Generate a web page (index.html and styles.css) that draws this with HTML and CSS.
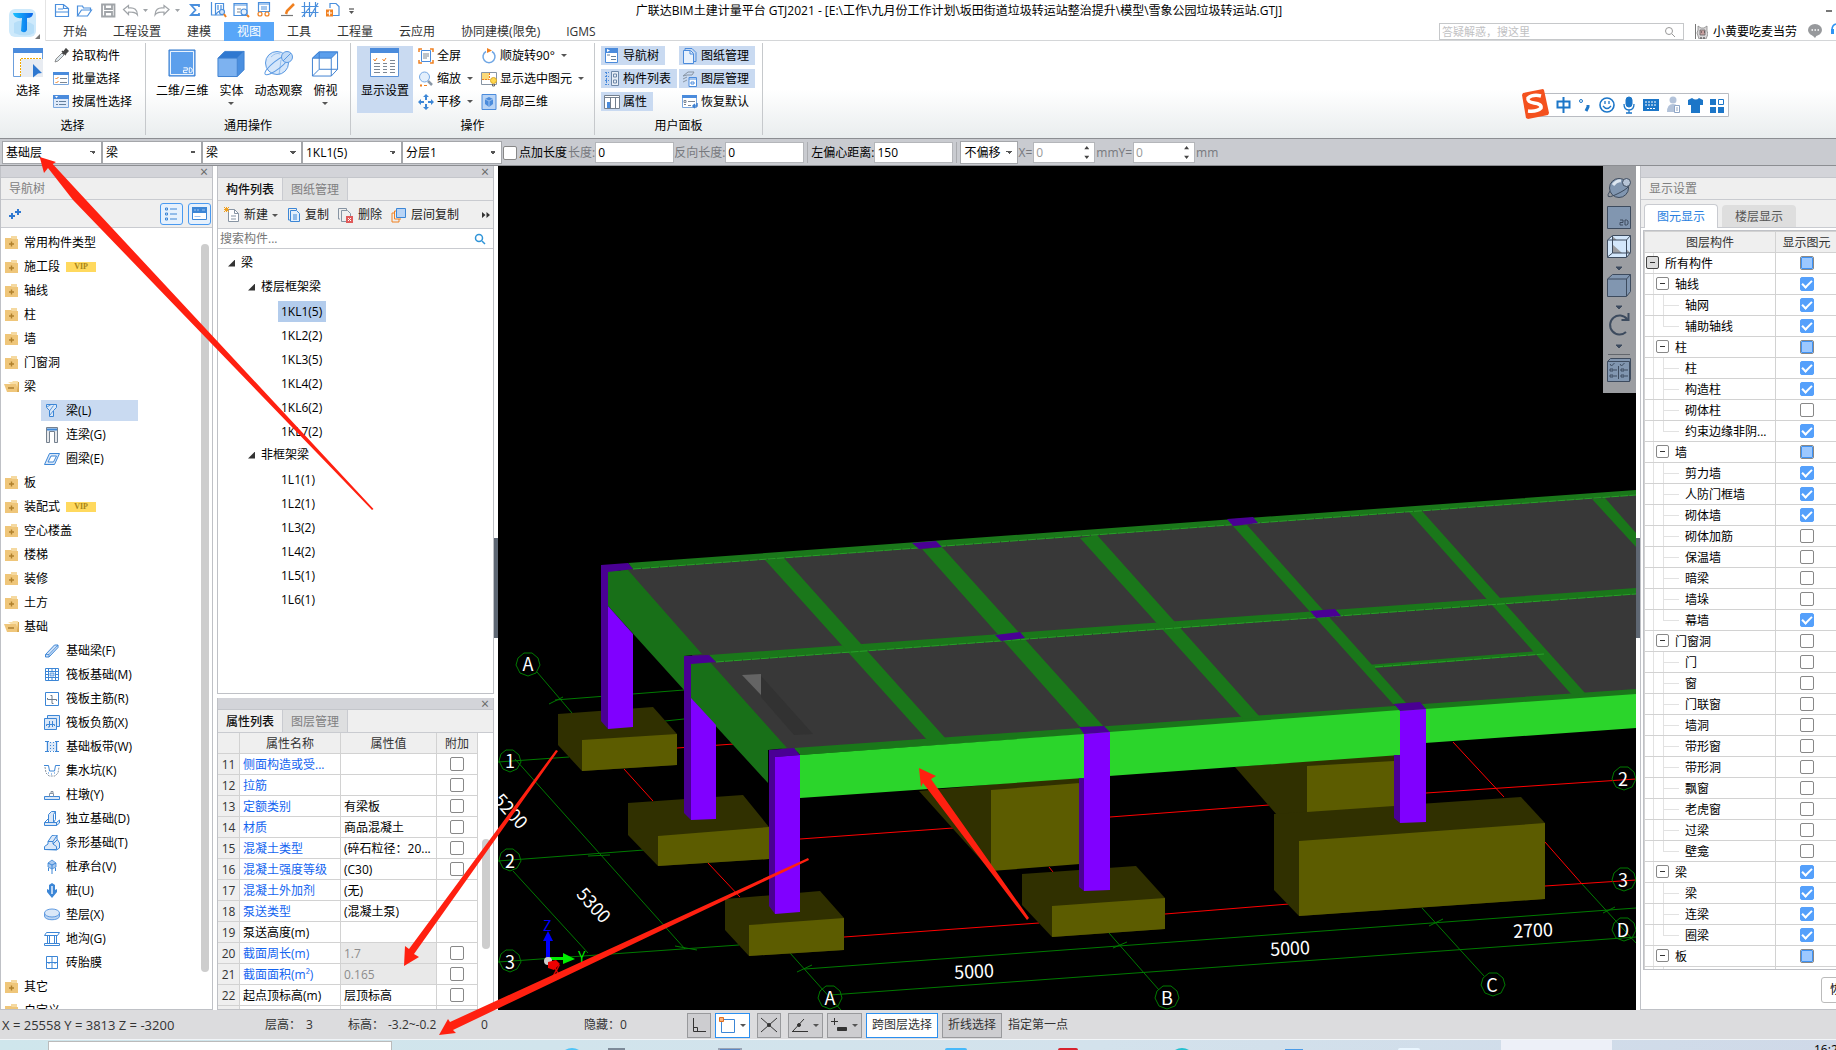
FILE: index.html
```html
<!DOCTYPE html>
<html lang="zh-CN">
<head>
<meta charset="utf-8">
<title>广联达BIM土建计量平台 GTJ2021</title>
<link rel="stylesheet" href="styles.css">
</head>
<body>
<svg class="defs" aria-hidden="true">
  <symbol id="folder" viewBox="0 0 16 14"><path d="M7 0h6v3H7z" fill="#f5d9a0"/><path d="M1 2h6l1 1h6v10H1z" fill="#efc67a"/><path d="M7.500 5.500v5M5 8h5" stroke="#b0802c" stroke-width="1.400"/></symbol>
  <symbol id="open" viewBox="0 0 16 14"><path d="M4 2h4l1-1h5v8z" fill="#f9dfa6"/><path d="M0 4h12l3 8H3z" fill="#efc67a"/><path d="M14 2h1v10h-2z" fill="#d9a850"/><path d="M4 8h6" stroke="#a87a2c" stroke-width="1.400"/></symbol>
  <symbol id="beam" viewBox="0 0 16 16"><path d="M2.500 1.500h10v3l-3 3v6h-4v-6l-3-3z" fill="#dbe8f8" stroke="#3c86d6"/><path d="M3 4l4-2.500M5.500 8l4-5.500M6 12l3-4" stroke="#3c86d6" stroke-width=".8"/></symbol>
  <symbol id="lbeam" viewBox="0 0 16 16"><path d="M2.500.5h11v15h-3v-11h-5v11h-3z" fill="#e6e8eb" stroke="#74808e"/><path d="M3 2.500h10" stroke="#3c86d6" stroke-width="2"/></symbol>
  <symbol id="ring" viewBox="0 0 16 16"><path d="M5.500 2.500h10l-5 11h-10z" fill="#dbe8f8" stroke="#3c86d6"/><path d="M7 5h5.500l-3 6H4z" fill="#fff" stroke="#3c86d6"/></symbol>
  <symbol id="fbeam" viewBox="0 0 16 16"><path d="M1.500 11.500l9-9.500h3.500v2.500l-9 9.500H1.500z" fill="#cfe0f6" stroke="#3c86d6"/><path d="M1.500 11.500H5V14M5 11.500L14 2" fill="none" stroke="#3c86d6" stroke-width=".8"/></symbol>
  <symbol id="raft" viewBox="0 0 16 16"><path d="M1.500 1.500h13v12h-13zM1.500 4.500h13M1.500 10.500h13M4.500 1.500v12M11.500 1.500v12M8 1v3M8 11v3M1 7.500h3M12 7.500h3" fill="none" stroke="#3c86d6"/><path d="M6 6h4v3H6z" fill="#bcd5f3" stroke="#3c86d6" stroke-width=".7"/></symbol>
  <symbol id="rmain" viewBox="0 0 16 16"><path d="M1.500 1.500h13v13h-13z" fill="#fff" stroke="#3c86d6"/><path d="M3.500 7V8.500h9V10M6.500 4.500H8v8h1.500" fill="none" stroke="#6d7a89"/></symbol>
  <symbol id="rneg" viewBox="0 0 16 16"><path d="M3.500 3.500v-3h12v11h-3M.5 3.500h12v11H.5z" fill="#dbe8f8" stroke="#3c86d6"/><path d="M2.500 11V9.500h8V11M5.500 6v6H4M8.500 6v6" fill="none" stroke="#3c86d6"/></symbol>
  <symbol id="strip" viewBox="0 0 16 16"><path d="M2 3h12v9H2z" fill="#dbe8f8"/><path d="M1 2.500h4M1 12.500h4M3.500 2v11M11 2.500h4M11 12.500h4M12.500 2v11" stroke="#3c86d6"/><path d="M6.500 3v10M9.500 3v10" stroke="#3c86d6" stroke-dasharray="1 2"/></symbol>
  <symbol id="pit" viewBox="0 0 16 16"><path d="M0 2.500h4.500l1 5.500h5l1-5.500H16" fill="none" stroke="#3c86d6"/><path d="M1 4l1 6 3 3h6l3-3 1-6" fill="none" stroke="#8794a3" stroke-dasharray="2 1"/><path d="M4 10h1M7 11h1M10 10h1" stroke="#3c86d6"/></symbol>
  <symbol id="pier" viewBox="0 0 16 16"><path d="M.5 9.500h15v3H.5z" fill="#dbe8f8" stroke="#3c86d6"/><path d="M5.500 9.500v-3h4v3M7 6V4.500h2V6" fill="none" stroke="#8794a3"/></symbol>
  <symbol id="indep" viewBox="0 0 16 16"><path d="M.5 11.500h12v3H.5zM12.500 11.500l3-2.500v3l-3 2.500zM4.500 3.500l3-3h4l-2 3v8h-5z" fill="#dbe8f8" stroke="#3c86d6"/><path d="M11.500.5v8l-2 3M.5 11.500L4 8" fill="none" stroke="#3c86d6"/></symbol>
  <symbol id="sfound" viewBox="0 0 16 16"><path d="M.5 14.500v-3L4 9V6.500l4-6 5-.5v4l2.500 4v5l-3 2z" fill="#dbe8f8" stroke="#3c86d6"/><path d="M4 6.500h5V9l3.500 2.500v3H.5M9 6.500L13 .5M9 9l4-4" fill="none" stroke="#3c86d6"/></symbol>
  <symbol id="cap" viewBox="0 0 16 16"><path d="M8 1l4 3v4l-4 2-4-2V4z" fill="#a9c9ef" stroke="#3c86d6" stroke-width=".8"/><path d="M4 4l4 2 4-2M8 6v9M4.500 9v3M11.500 9v3" fill="none" stroke="#3c86d6"/></symbol>
  <symbol id="pile" viewBox="0 0 16 16"><path d="M5 2l3-2 3 2v5l2-1v3l-5 6-5-6V6l2 1z" fill="#3c86d6"/><path d="M7 3h2v8H7z" fill="#bcd5f3"/></symbol>
  <symbol id="bed" viewBox="0 0 16 16"><path d="M.5 6v3c0 5 15 5 15 0V6" fill="#bcd5f3" stroke="#5f9ae0"/><ellipse cx="8" cy="6" rx="7.500" ry="4" fill="#dbe8f8" stroke="#5f9ae0"/></symbol>
  <symbol id="trench" viewBox="0 0 16 16"><path d="M.5 4.500l2-3h13l-2 3zM3.500 4.500v8M12.500 4.500v8M5.500 5v8M10.500 5v8M.5 14.500h15v-2H.5z" fill="none" stroke="#3c86d6"/></symbol>
  <symbol id="brick" viewBox="0 0 16 16"><path d="M2.500 1.500h11v12h-11zM2.500 7.500h11M8 1.500v12M5 7v2M11 7v2" fill="none" stroke="#3c86d6"/></symbol>
</svg>

<header class="titlebar">
  <div class="logo"><svg width="30" height="30" viewBox="0 0 30 30"><defs><linearGradient id="lg" x1="0" x2="1"><stop offset="0" stop-color="#19c2ff"/><stop offset="1" stop-color="#0a63e8"/></linearGradient></defs><rect x="1" y="1" width="27" height="28" rx="6" fill="#cde9fb"/><path d="M6 15q8-6 20 2v8q-8 5-20 0z" fill="#b6def8"/><path d="M5 5h20q0 5-6 5v12q-2 4-6 1l1-13q-8 1-9-5z" fill="url(#lg)"/></svg><svg class="corner" width="5" height="5" viewBox="0 0 5 5"><path d="M5 0v5H0z" fill="#777"/></svg></div>
  <div class="head">
    <div class="caption">
      <div class="quick">
        <svg width="302" height="18" viewBox="53 1 302 18" fill="none" stroke-width="1.200">
          <g stroke="#4a8fdd"><path d="M55.500 4.500h8l5 4v8h-13zM55.500 12h13M63.500 4.500v4h5M58 9h5"/><path d="M77.500 16V6h5l1 2h7v2M77.500 16l4-6h10l-4 6z"/></g>
          <g stroke="#a0a4a8"><path d="M102 4.500h12.500v12H102zM105 5v4h7V5M105 16v-4h7v4" stroke-width="1.800"/><path d="M123.500 9.500l5-4v2.500c6-1 9 2 9 7-2-3-5-3-9-3v2.500zM169 9.500l-5-4v2.500c-6-1-9 2-9 7 2-3 5-3 9-3v2.500z"/></g>
          <path d="M143 9h5l-2.500 3zM175 9h5l-2.500 3z" fill="#a0a4a8"/>
          <path d="M199 7V5h-8l4.500 5-4.500 5h8v-2" stroke="#4a8fdd" stroke-width="1.800"/>
          <g stroke="#4a8fdd"><path d="M211.500 2v13h12M215.500 3.500h8v8h-5l-3 3zM218 5v5M221 5v5"/><path d="M234 3.500h13v12h-13zM234 5h13" /><path d="M237 9h4M237 12h3" stroke="#7c8794"/><path d="M258.500 2.500h11v9h-11zM258.500 4h11M261 7h6M261 9h6"/><path d="M301.500 6.500h17M301.500 12.500h17M304.500 2v15M309.500 2v15M315.500 2v15M302 17l8-10M310 17l8-14"/><path d="M330 8V3.500h6l3 3v9h-6"/></g>
          <g stroke="#f08020"><circle cx="222" cy="12" r="2.500" fill="#cfe2f8" stroke="#4a8fdd"/><path d="M224 14l2 3M247 15l2 2" stroke-width="2"/><circle cx="244" cy="12" r="3" fill="#e6f2fd" stroke="#4a8fdd"/><circle cx="260" cy="14" r="2"/><circle cx="267" cy="14" r="2"/><path d="M294 4l-7 7-1 3" stroke-width="2.500"/></g>
          <path d="M281 15.500h12" stroke="#777"/><path d="M326 9.500h7v7h-7z" fill="#f08020"/><path d="M329.500 10.500v5M327 13h5" stroke="#fff"/>
          <path d="M349 9h5" stroke="#555"/><path d="M349 11h5l-2.500 3z" fill="#555"/>
        </svg>
      </div>
      <h1>广联达BIM土建计量平台 GTJ2021 - [E:\工作\九月份工作计划\坂田街道垃圾转运站整治提升\模型\雪象公园垃圾转运站.GTJ]</h1>
      <button class="min" aria-label="最小化"></button>
    </div>
    <div class="tabrow">
      <nav class="tabs"><a href="#">开始</a><a href="#">工程设置</a><a href="#">建模</a><a href="#" class="on">视图</a><a href="#">工具</a><a href="#">工程量</a><a href="#">云应用</a><a href="#">协同建模(限免)</a><a href="#">IGMS</a></nav>
      <label class="ask"><input type="search" placeholder="答疑解惑，搜这里" aria-label="答疑解惑"><svg width="12" height="12" viewBox="0 0 12 12" fill="none" stroke="#999"><circle cx="5" cy="5" r="3.500"/><path d="M8 8l3 3"/></svg></label>
      <div class="user"><svg width="13" height="15" viewBox="0 0 13 15"><path d="M.5 0v15" stroke="#777"/><path d="M3 6L3 2l3 2h3l3-2v5l1 3-2 5H4L2 9z" fill="#d9d6d8" stroke="#888" stroke-width=".8"/><path d="M5 6h5v5H5z" fill="#c9a0a0" stroke="#666" stroke-width=".8"/><path d="M6 8h1M9 8h1M6 13v2M9 13v2" stroke="#333"/></svg><span>小黄要吃麦当劳</span></div>
      <svg class="chat" width="28" height="17" viewBox="0 0 28 17"><ellipse cx="7" cy="7" rx="7" ry="6" fill="#97999c"/><path d="M4 12h5l-2 3z" fill="#97999c"/><path d="M3.500 7h1.500M6.500 7H8M9.500 7H11" stroke="#fff" stroke-width="1.600"/><path d="M28 1q-4 1-4 6" fill="none" stroke="#2f94f3" stroke-width="1.600"/><path d="M23 6h3v5h-3z" fill="#2f94f3"/></svg>
    </div>
  </div>
</header>

<section class="ribbon">
  <div class="group g1">
    <div class="tools">
      <button class="big pick"><svg width="30" height="30" viewBox="0 0 30 30"><path d="M.5.5h29v28H.5z" fill="#fff" stroke="#6c9fdc"/><path d="M0 0h30v5H0z" fill="#4a8bdc"/><path d="M8 11h22v18H8z" fill="#e8ecf2"/><path d="M7.500 28V10.500H29" fill="none" stroke="#f2a900" stroke-dasharray="2 1"/><path d="M20 16l9 9-4 .5-5 4z" fill="#2f78d0"/></svg>选择</button>
      <div class="col">
        <button><svg width="16" height="16" viewBox="0 0 16 16"><path d="M2 14l1-3 6-6 2 2-6 6z" fill="#dfe8ee" stroke="#777" stroke-width=".8"/><path d="M9 3l4 4M10 5l3-4 2 2-3 3z" fill="#444" stroke="#444" stroke-width="1.500"/></svg>拾取构件</button>
        <button><svg width="16" height="16" viewBox="0 0 16 16"><path d="M.5 1.500h15v12H.5z" fill="#fff" stroke="#7aa7de"/><path d="M0 1h16v3H0z" fill="#4a8bdc"/><path d="M2.500 7l1 1 2-2M2.500 11l1 1 2-2" fill="none" stroke="#f08020"/><path d="M7 7.500h7M7 11.500h7" stroke="#7c8794"/></svg>批量选择</button>
        <button><svg width="16" height="16" viewBox="0 0 16 16"><path d="M.5 1.500h15v12H.5z" fill="#dfeafa" stroke="#7aa7de"/><path d="M0 1h16v4H0z" fill="#4a8bdc"/><path d="M2 2h3L3.500 4z" fill="#fff"/><path d="M3 7.500h2M6 7.500h7M3 10.500h2M6 10.500h7" stroke="#64809c"/></svg>按属性选择</button>
      </div>
    </div>
    <h2>选择</h2>
  </div>
  <div class="group g2">
    <div class="tools">
      <button class="big"><svg width="28" height="30" viewBox="0 0 29 30"><path d="M1 1.500h27v27H1z" fill="#5c9fec" stroke="#3c7fd0"/><path d="M2.500 3h24v24h-24z" fill="none" stroke="#fff"/><path d="M16 20h4v2.500h-4V25h4M22 20v5h1.500l1.500-1v-3l-1.500-1z" fill="none" stroke="#fff"/></svg>二维/三维</button>
      <button class="big"><svg width="28" height="30" viewBox="0 0 29 30"><path d="M1 10l7-7h20l-7 7z" fill="#2f78d0"/><path d="M1 10h20v19H1z" fill="#7db2f0"/><path d="M21 10l7-7v19l-7 7z" fill="#4a8fe0"/><path d="M1 10l7-7h20v19l-7 7H1zM21 29V10l7-7M1 10h20" fill="none" stroke="#3c7fd0"/></svg>实体<i class="car"></i></button>
      <button class="big"><svg width="30" height="30" viewBox="0 0 30 30" stroke="#5a99e2"><circle cx="14" cy="15" r="11.500" fill="#d5e6fa"/><ellipse cx="14" cy="17" rx="15" ry="4" transform="rotate(-38 14 17)" fill="none"/><path d="M8 9q5-5 9-3M18 12l-2 15" fill="none" stroke-opacity=".5"/><circle cx="24" cy="9" r="5.500" fill="#c2dbf7"/><path d="M20 13l8-8" /></svg>动态观察</button>
      <button class="big"><svg width="28" height="30" viewBox="0 0 29 30"><path d="M1 10l7-7h20l-7 7z" fill="#5c9fec"/><path d="M1.500 10l7-6.500h19v18L21 28.500H1.500zM21 28.500V10l6.500-6.500M1.500 10H21M8.500 4v17.500h19M8.500 21.500l-7 7" fill="none" stroke="#3c7fd0"/></svg>俯视<i class="car"></i></button>
    </div>
    <h2>通用操作</h2>
  </div>
  <div class="group g3">
    <div class="tools">
      <button class="big sel"><svg width="30" height="30" viewBox="0 0 30 30"><path d="M.5.500h28v28H.5z" fill="#fff" stroke="#5c93d8"/><path d="M0 0h29v5H0z" fill="#4a8bdc"/><path d="M3.500 11l1.500 2 2-3M12.500 11l1.500 2 2-3" fill="none" stroke="#f08020"/><path d="M4 15.500h6M4 18.500h6M4 21.500h6M4 24.500h6M13 15.500h4M13 18.500h4M13 21.500h4M13 24.500h4M20 12.500h5M20 15.500h5M20 18.500h5M20 21.500h5M20 24.500h5" stroke="#7c8794"/></svg>显示设置</button>
      <div class="col c1">
        <button><svg width="16" height="16" viewBox="0 0 16 16" fill="none"><path d="M1 4V1h3M12 1h3v3M15 12v3h-3M4 15H1v-3" stroke="#f08020" stroke-width="1.500"/><path d="M3.500 2.500h9v11h-9z" stroke="#4a8bdc" fill="#fff"/><path d="M5 6h6M5 8h6M5 10h4" stroke="#7c8794"/></svg>全屏</button>
        <button><svg width="16" height="16" viewBox="0 0 16 16" fill="none"><circle cx="6.500" cy="6" r="5" fill="#e3effc" stroke="#74a8e4"/><path d="M10 10l4 4" stroke="#8a97a6" stroke-width="2.500"/><path d="M2 14.500h2M6 14.500h3M3 13v3" stroke="#f08020"/></svg>缩放<i class="car"></i></button>
        <button><svg width="16" height="16" viewBox="0 0 16 16" fill="#3c86d6"><path d="M8 0l3 3H9v3H7V3H5zM8 16l3-3H9v-3H7v3H5zM0 8l3-3v2h3v2H3v2zM16 8l-3-3v2h-3v2h3v2z"/></svg>平移<i class="car"></i></button>
      </div>
      <div class="col c2">
        <button><svg width="16" height="16" viewBox="0 0 16 16" fill="none"><path d="M11 3.500A6 6 0 1 1 5 3.500" stroke="#6fa6e4" stroke-width="1.500"/><path d="M6 0l5 2.500L6 5z" fill="#f08020"/></svg>顺旋转90°<i class="car"></i></button>
        <button><svg width="16" height="16" viewBox="0 0 16 16" fill="none"><path d="M.5 1.500h15v12H.5z" fill="#fff" stroke="#8794a3"/><path d="M1 2h7v7H1z" fill="#fbd978"/><path d="M8.500 2v6.500H1" stroke="#f08020" stroke-dasharray="2 1"/><circle cx="12.500" cy="9.500" r="3" fill="#ffd84d" stroke="#d9a82a"/><path d="M11.500 13v2h2v-2" stroke="#666"/></svg>显示选中图元<i class="car"></i></button>
        <button><svg width="16" height="16" viewBox="0 0 16 16"><path d="M1 .5h14v15H1z" fill="#b9d4f5" stroke="#4a8bdc"/><path d="M8 3l4 2v5l-4 3-4-3V5z" fill="#4a8bdc"/><path d="M4 5l4 2 4-2M8 7v6" stroke="#9cc2f0" fill="none"/></svg>局部三维</button>
      </div>
    </div>
    <h2>操作</h2>
  </div>
  <div class="group g4">
    <div class="tools">
      <div class="col u1">
        <button class="sel"><svg width="16" height="16" viewBox="0 0 16 16"><path d="M1.500.5h12v14h-12z" fill="#fff" stroke="#4a8bdc"/><path d="M1 0h13v5H1z" fill="#4a8bdc"/><path d="M3 1l3 1.500L3 4z" fill="#fff"/><path d="M3 7h3M7 8.500h5M7 11.500h5" stroke="#64809c"/></svg>导航树</button>
        <button class="sel"><svg width="16" height="16" viewBox="0 0 16 16" fill="none"><path d="M1 1.500h4M1 5.500h4M1 9.500h4M1 13.500h4M2.500 1v13" stroke="#4a8bdc" stroke-dasharray="2 1"/><path d="M7.500.5h7v14h-7z" fill="#e8eef6" stroke="#6e88a8"/><path d="M9.500 3h3v3h-3zM9.500 9h3v3h-3z" stroke="#6e88a8"/></svg>构件列表</button>
        <button class="sel"><svg width="16" height="16" viewBox="0 0 16 16" fill="none"><path d="M.5 1.500h15v13H.5z" fill="#fff" stroke="#74808e"/><path d="M.5 3.500h15M6.500 4v10M11.500 4v10" stroke="#74808e"/><path d="M3 8h3v6H3z" fill="#4a8bdc"/></svg>属性</button>
      </div>
      <div class="col u2">
        <button class="sel"><svg width="16" height="16" viewBox="0 0 16 16" fill="none"><path d="M3 2V.5h7l4 4v9h-2" stroke="#4a8bdc"/><path d="M1.500 2.500h7l3 3v10h-10z" fill="#e8f1fc" stroke="#4a8bdc"/><path d="M8 3v3h3" stroke="#4a8bdc"/></svg>图纸管理</button>
        <button class="sel"><svg width="16" height="16" viewBox="0 0 16 16" fill="none"><path d="M1 5l5-4h6l-2 3H5zM1 8l4-2M1 11l4-2" stroke="#8794a3"/><path d="M7 6.500h7.500v9H7z" fill="#fff" stroke="#4a8bdc"/><path d="M7 8h7M9 11h3v2H9z" stroke="#4a8bdc"/></svg>图层管理</button>
        <button><svg width="16" height="16" viewBox="0 0 16 16" fill="none"><path d="M.5 1.500h14v12H.5z" fill="#fff" stroke="#7aa7de"/><path d="M0 1h15v3H0z" fill="#4a8bdc"/><path d="M2 6.500h2v2H2zM2 10.500h2M6 7.500h7M6 11.500h3" stroke="#7c8794"/><path d="M15 9v3h-4M13 10l-2 2 2 2" stroke="#3c7fd0" stroke-width="1.500"/></svg>恢复默认</button>
      </div>
    </div>
    <h2>用户面板</h2>
  </div>
</section>

<section class="options">
  <select class="dd" aria-label="楼层"><option>基础层</option></select>
  <select class="dd" aria-label="类别"><option>梁</option></select>
  <select class="dd" aria-label="类型"><option>梁</option></select>
  <select class="dd" aria-label="构件"><option>1KL1(5)</option></select>
  <select class="dd" aria-label="分层"><option>分层1</option></select>
  <label class="chk"><input type="checkbox">点加长度</label>
  <label class="off">长度:<input class="num" value="0"></label>
  <label class="off">反向长度:<input class="num" value="0"></label>
  <label class="ecc">左偏心距离:<input class="num" value="150"></label>
  <select class="dd shift" aria-label="偏移"><option>不偏移</option></select>
  <label class="off">X=<span class="spin"><input value="0"><i></i></span>mm</label>
  <label class="off">Y=<span class="spin"><input value="0"><i></i></span>mm</label>
</section>

<main class="work">
  <aside class="nav panel">
    <div class="grip"><button aria-label="关闭">×</button></div>
    <h2 class="name">导航树</h2>
    <div class="navbar">
      <svg width="14" height="12" viewBox="0 0 14 12"><path d="M4 5v6M1 8h6M10 1v6M7 4h6" stroke="#2f78d0" stroke-width="2"/></svg>
      <span class="grow"></span>
      <button aria-label="列表"><svg width="16" height="16" viewBox="0 0 16 16" fill="none" stroke="#3c86d6"><path d="M1.500 2h2v2h-2zM1.500 7h2v2h-2zM1.500 12h2v2h-2zM6 3h7M6 8h7M6 13h7"/></svg></button>
      <button aria-label="图标"><svg width="16" height="16" viewBox="0 0 16 16" fill="none"><path d="M.5 1.500h14v12H.5z" fill="#fff" stroke="#3c86d6"/><path d="M0 1h15v6H0z" fill="#3c86d6"/><path d="M2 4h2M5 4h2M10 4h3M2.500 10.500h6" stroke="#9cc2f0"/></svg></button>
    </div>
    <div class="tree">
      <ul>
        <li><svg><use href="#folder"/></svg>常用构件类型</li>
        <li><svg><use href="#folder"/></svg>施工段<b>VIP</b></li>
        <li><svg><use href="#folder"/></svg>轴线</li>
        <li><svg><use href="#folder"/></svg>柱</li>
        <li><svg><use href="#folder"/></svg>墙</li>
        <li><svg><use href="#folder"/></svg>门窗洞</li>
        <li><svg><use href="#open"/></svg>梁</li>
        <li class="sub on"><svg><use href="#beam"/></svg>梁(L)</li>
        <li class="sub"><svg><use href="#lbeam"/></svg>连梁(G)</li>
        <li class="sub"><svg><use href="#ring"/></svg>圈梁(E)</li>
        <li><svg><use href="#folder"/></svg>板</li>
        <li><svg><use href="#folder"/></svg>装配式<b>VIP</b></li>
        <li><svg><use href="#folder"/></svg>空心楼盖</li>
        <li><svg><use href="#folder"/></svg>楼梯</li>
        <li><svg><use href="#folder"/></svg>装修</li>
        <li><svg><use href="#folder"/></svg>土方</li>
        <li><svg><use href="#open"/></svg>基础</li>
        <li class="sub"><svg><use href="#fbeam"/></svg>基础梁(F)</li>
        <li class="sub"><svg><use href="#raft"/></svg>筏板基础(M)</li>
        <li class="sub"><svg><use href="#rmain"/></svg>筏板主筋(R)</li>
        <li class="sub"><svg><use href="#rneg"/></svg>筏板负筋(X)</li>
        <li class="sub"><svg><use href="#strip"/></svg>基础板带(W)</li>
        <li class="sub"><svg><use href="#pit"/></svg>集水坑(K)</li>
        <li class="sub"><svg><use href="#pier"/></svg>柱墩(Y)</li>
        <li class="sub"><svg><use href="#indep"/></svg>独立基础(D)</li>
        <li class="sub"><svg><use href="#sfound"/></svg>条形基础(T)</li>
        <li class="sub"><svg><use href="#cap"/></svg>桩承台(V)</li>
        <li class="sub"><svg><use href="#pile"/></svg>桩(U)</li>
        <li class="sub"><svg><use href="#bed"/></svg>垫层(X)</li>
        <li class="sub"><svg><use href="#trench"/></svg>地沟(G)</li>
        <li class="sub"><svg><use href="#brick"/></svg>砖胎膜</li>
        <li><svg><use href="#folder"/></svg>其它</li>
        <li><svg><use href="#folder"/></svg>自定义</li>
      </ul>
      <div class="bar"></div>
    </div>
  </aside>

  <div class="mid">
    <section class="panel comps">
      <div class="grip"><button aria-label="关闭">×</button></div>
      <div class="ptabs"><button class="on">构件列表</button><button>图纸管理</button></div>
      <div class="compbar">
        <button><svg width="16" height="16" viewBox="0 0 16 16" fill="none"><path d="M4.500 2.500h6l4 4v8h-10z" fill="#fff" stroke="#8794a3"/><path d="M10.500 2.500v4h4M7 9h5M7 12h5" stroke="#8794a3"/><path d="M0 0l5 5M5 0L0 5M2.500 0v5M0 2.500h5" stroke="#f0a020"/></svg>新建<i class="car"></i></button>
        <button><svg width="14" height="16" viewBox="0 0 14 16" fill="none" stroke="#3c86d6"><path d="M3 13H1.500V1.500h8V3"/><path d="M3.500 3.500h6l3 3v8h-9z" fill="#e3effc"/><path d="M6 8h4M6 10h4M6 12h4"/></svg>复制</button>
        <button><svg width="16" height="16" viewBox="0 0 16 16" fill="none"><path d="M2 12H.5V1.500h8V3M3.500 3.500h6l3 3v8h-9z" stroke="#8794a3"/><path d="M8 9h7v7H8z" fill="#e05a5a"/><path d="M10 11l3 3M13 11l-3 3" stroke="#fff"/></svg>删除</button>
        <button><svg width="16" height="16" viewBox="0 0 16 16" fill="none"><path d="M3.500 6H1v9h7v-3M6 4H3.500v8H10" stroke="#f08020"/><path d="M5.500 1.500h9v9h-9z" fill="#b9d4f5" stroke="#3c86d6"/></svg>层间复制</button>
        <span class="grow"></span>
        <svg width="8" height="8" viewBox="0 0 8 8"><path d="M0 1l3.500 3L0 7zM4.500 1L8 4 4.500 7z" fill="#333"/></svg>
      </div>
      <label class="find"><input type="search" placeholder="搜索构件..." aria-label="搜索构件"><svg width="12" height="12" viewBox="0 0 12 12" fill="none" stroke="#2f94d8" stroke-width="1.500"><circle cx="5" cy="5" r="3.500"/><path d="M8 8l3 3"/></svg></label>
      <ul class="ctree">
        <li class="l0">梁</li><li class="l1">楼层框架梁</li>
        <li class="l2"><span class="on">1KL1(5)</span></li><li class="l2"><span>1KL2(2)</span></li><li class="l2"><span>1KL3(5)</span></li><li class="l2"><span>1KL4(2)</span></li><li class="l2"><span>1KL6(2)</span></li><li class="l2"><span>1KL7(2)</span></li>
        <li class="l1">非框架梁</li>
        <li class="l2"><span>1L1(1)</span></li><li class="l2"><span>1L2(1)</span></li><li class="l2"><span>1L3(2)</span></li><li class="l2"><span>1L4(2)</span></li><li class="l2"><span>1L5(1)</span></li><li class="l2"><span>1L6(1)</span></li>
      </ul>
    </section>
    <section class="panel props">
      <div class="grip"><button aria-label="关闭">×</button></div>
      <div class="ptabs"><button class="on">属性列表</button><button>图层管理</button></div>
      <div class="ptable">
        <table>
          <thead><tr><th class="n"></th><th class="k">属性名称</th><th class="v">属性值</th><th class="a">附加</th></tr></thead>
          <tbody>
            <tr><th>11</th><td class="blue">侧面构造或受...</td><td></td><td><input type="checkbox" aria-label="附加"></td></tr>
            <tr><th>12</th><td class="blue">拉筋</td><td></td><td><input type="checkbox" aria-label="附加"></td></tr>
            <tr><th>13</th><td class="blue">定额类别</td><td>有梁板</td><td><input type="checkbox" aria-label="附加"></td></tr>
            <tr><th>14</th><td class="blue">材质</td><td>商品混凝土</td><td><input type="checkbox" aria-label="附加"></td></tr>
            <tr><th>15</th><td class="blue">混凝土类型</td><td>(碎石粒径：20...</td><td><input type="checkbox" aria-label="附加"></td></tr>
            <tr><th>16</th><td class="blue">混凝土强度等级</td><td>(C30)</td><td><input type="checkbox" aria-label="附加"></td></tr>
            <tr><th>17</th><td class="blue">混凝土外加剂</td><td>(无)</td><td></td></tr>
            <tr><th>18</th><td class="blue">泵送类型</td><td>(混凝土泵)</td><td></td></tr>
            <tr><th>19</th><td>泵送高度(m)</td><td></td><td></td></tr>
            <tr><th>20</th><td class="blue">截面周长(m)</td><td class="ro">1.7</td><td><input type="checkbox" aria-label="附加"></td></tr>
            <tr><th>21</th><td class="blue">截面面积(m²)</td><td class="ro">0.165</td><td><input type="checkbox" aria-label="附加"></td></tr>
            <tr><th>22</th><td>起点顶标高(m)</td><td>层顶标高</td><td><input type="checkbox" aria-label="附加"></td></tr>
            <tr><th></th><td></td><td></td><td></td></tr>
          </tbody>
        </table>
        <div class="bar"></div>
      </div>
    </section>
  </div>

  <div class="split"><i></i></div>

  <section class="view">
    <svg class="scene" viewBox="498 166 1138 844" preserveAspectRatio="xMidYMid slice" role="img" aria-label="三维模型">
      <g stroke="#f00" fill="none"><path d="M677 748L734 744M624 769L653 801M708 863L740 897M800 839L953 828M1110 817L1269 805M1426 793L1636 779M844 937L1039 923M1165 914L1289 904M1545 886L1636 880M1453 742L1504 797M1545 842L1582 884M1049 867l4 5"/></g>
      <g stroke="#007a00" fill="none">
        <path d="M537 672L572 713M555 700L684 690M549 704l14-7M665 721L684 719M498 762L569 757M515 759L685 949M498 861L644 850M588 856l22-1M513 871L588 953M498 962L739 945M675 946l22 4M790 953L841 1010M797 972L812 965M805 969L1636 908M830 995L1636 937M1109 933L1159 990M1113 948l14-6M1422 908L1484 976M1429 926l14-7M1582 884L1636 943M1603 913l12-6"/>
        <path d="M524 653l8 0 6 5 2 7-4 8-8 3-8-3-4-8 2-7zM506 750l7 0 6 5 2 7-4 7-7 3-7-3-4-8 2-7zM506 849l7 0 6 5 2 7-4 7-7 3-7-3-4-8 2-7zM506 950l7 0 6 5 2 7-4 7-7 3-7-3-4-8 2-7zM826 986l8 0 6 5 2 7-4 8-8 3-8-3-4-8 2-7zM1163 986l8 0 6 5 2 7-4 8-8 3-8-3-4-8 2-7zM1489 973l8 0 6 5 2 7-4 8-8 3-8-3-4-8 2-7zM1620 918l8 0 6 5 2 7-4 8-8 3-8-3-4-8 2-7zM1620 767l8 0 6 5 2 7-4 8-8 3-8-3-4-8 2-7zM1620 868l8 0 6 5 2 7-4 8-8 3-8-3-4-8 2-7z"/>
      </g>
      <g fill="#303000">
        <path d="M558 714L653 707L677 734L677 765L582 771L558 745zM628 803L743 795L769 827V859L658 866L628 835zM725 899L820 891L844 918V950L749 956L725 930zM1022 874L1136 866L1165 898V929L1052 937L1022 905zM919 791L1084 776L1078 784L991 871zM1235 767L1394 754V807L1277 815z"/>
        <path d="M1274 814L1521 797L1545 823V899L1299 916L1274 890z"/>
      </g>
      <g fill="#5c5c00"><path d="M582 740L677 734V765L582 771zM658 836L769 827V859L658 866zM749 925L844 918V950L749 956zM1052 906L1165 898V929L1052 937zM991 790L1080 783V864L991 871zM1307 766L1394 761V806L1307 812zM1299 841L1545 823V899L1299 916z"/></g>
      <path d="M618 567L1636 493V691L798 752L768 746z" fill="#383838"/>
      <path d="M742 675L761 674V695z" fill="#646464"/><path d="M761 676L813 734L794 735L761 697z" fill="#323232"/>
      <g fill="#1a771a">
        <path d="M628 563L1636 490V495L633 569zM709 655L1636 588V594L716 662zM794 748L1636 689V695L800 755z"/>
        <path d="M765 560L784 558L947 740L928 741zM922 549L942 547L1104 727L1081 728zM1080 538L1097 535L1260 717L1243 719zM1233 526L1247 525L1406 703L1393 704zM1409 512L1422 511L1585 693L1572 695zM1592 499L1605 498L1636 533V547zM1367 665L1538 651L1544 654L1375 668z"/>
      </g>
      <g fill="none" stroke="#27a127"><path d="M633 569L1636 495M716 662L1636 594M1375 667L1544 654" stroke-dasharray="8 1"/></g>
      <path d="M608 571L628 570L702 654L684 656V690L608 606zM690 663L710 662L787 748L768 750V783L690 698z" fill="#187018"/>
      <path d="M800 755L1084 734V778L800 798zM1109 732L1400 710V755L1109 776zM1425 709L1636 694V728L1425 743z" fill="#2bd52b"/>
      <g fill="#4a0094"><path d="M601 565L628 563L633 569L608 572V729L601 721zM684 656L709 655L716 662L691 664V820L684 813zM769 750L794 748L800 755L775 757V914L769 906zM912 543L936 541L942 547L919 549zM995 635L1020 632L1025 638L1001 641zM1079 727L1104 726L1110 732L1084 734zM1227 519L1253 517L1258 523L1233 526zM1310 611L1335 609L1341 616L1316 618zM1394 704L1420 702L1426 709L1400 711zM1079 778H1084V891L1079 887zM1394 755H1400V823L1394 818z"/></g>
      <path d="M608 606L633 634V727L608 729zM691 698L716 725V819L691 820zM775 757L800 755V912L775 914zM1084 734L1110 732V890L1084 891zM1400 711L1426 709V822L1400 823z" fill="#8000ff"/>
      <g fill="#fff" class="marks" text-anchor="middle">
        <text x="528" y="671">A</text><text x="510" y="768">1</text><text x="510" y="868">2</text><text x="510" y="969">3</text><text x="830" y="1005">A</text><text x="1167" y="1005">B</text><text x="1492" y="992">C</text><text x="1623" y="937">D</text><text x="1623" y="786">2</text><text x="1623" y="887">3</text>
        <text x="974" y="978" transform="rotate(-3 974 971)">5000</text><text x="1290" y="955" transform="rotate(-3 1290 948)">5000</text><text x="1533" y="937" transform="rotate(-3 1533 930)">2700</text>
        <text x="594" y="912" transform="rotate(48 594 905)">5300</text><text x="511" y="818" transform="rotate(48 511 811)">5200</text>
      </g>
      <path d="M546 959V941h-3l5-10 5 10h-3v18z" fill="#00f"/><path d="M549 957h14v-4l12 6-12 5v-4h-14z" fill="#0e0"/><circle cx="548" cy="961" r="4" fill="#ccc"/><path d="M548 962l8-2 4 4-6 6-6-2z" fill="#e00"/>
      <text x="543" y="931" class="ax" fill="#00f">Z</text><text x="578" y="962" class="ax" fill="#0e0">Y</text><text x="552" y="976" class="ax" fill="#e00">X</text>
    </svg>
    <div class="vbar">
      <svg width="24" height="217" viewBox="0 0 24 217" fill="none" stroke="#3d4b5e">
        <circle cx="12" cy="12" r="9.500" fill="#8196b0"/><path d="M6 9q4-5 8-4" stroke="#dde6f0" stroke-width="3"/><path d="M3 15Q-3 24 8 19T22 10" /><circle cx="19.500" cy="6.500" r="4" fill="#b6c4d6"/>
        <path d="M.5 30.500h23v22H.5z" fill="#8196b0"/><path d="M13 44h3v2.500h-3V49h3M18 44v5h1.500l1.500-1v-3l-1.500-1z"/>
        <path d="M.5 64l5-4.500h18v17l-4 5H.5zM.5 64h19v17M19.500 64l4-4.500M5.500 60v17h18M5.500 77l-5 4" fill="#d3e7fb"/>
        <path d="M9 91h6l-3 3z" fill="#3d4b5e"/>
        <path d="M.5 103l5-4.500h18v17l-4 5H.5zM.5 103h19v17M19.500 103l4-4.500" fill="#8196b0"/>
        <path d="M9 130h6l-3 3z" fill="#3d4b5e"/>
        <path d="M20 143A9.500 9.500 0 1 0 19 156M21.500 137v7h-7" stroke-width="2"/>
        <path d="M9 169h6l-3 3z" fill="#3d4b5e"/><path d="M1 178.500h22" stroke="#62666c"/>
        <path d="M.5 185.500l3-3h20v21l-1 2H.5zM.5 185.500h22v20" fill="#8196b0"/><path d="M3 188l1.500 2 3-3M13 188l1.500 2 3-3M3 193h3v2H3zM3 199h3v2H3zM14 193h3v2h-3zM14 199h3v2h-3zM7 194h3M7 200h3M18 194h3M18 200h3M11.500 190v13"/>
      </svg>
    </div>
  </section>

  <div class="split"><i></i></div>

  <aside class="panel disp">
    <div class="grip"></div>
    <h2 class="name">显示设置</h2>
    <div class="dtabs"><button class="on">图元显示</button><button>楼层显示</button></div>
    <div class="dtable">
      <table>
        <thead><tr><th class="d1">图层构件</th><th>显示图元</th></tr></thead>
        <tbody>
          <tr class="t0"><td><i class="pm"></i>所有构件</td><td><input type="checkbox" class="part" aria-label="所有构件"></td></tr>
          <tr class="t1"><td><i class="pm"></i>轴线</td><td><input type="checkbox" checked aria-label="轴线"></td></tr>
          <tr class="t2"><td>轴网</td><td><input type="checkbox" checked aria-label="轴网"></td></tr>
          <tr class="t2 end"><td>辅助轴线</td><td><input type="checkbox" checked aria-label="辅助轴线"></td></tr>
          <tr class="t1"><td><i class="pm"></i>柱</td><td><input type="checkbox" class="part" aria-label="柱"></td></tr>
          <tr class="t2"><td>柱</td><td><input type="checkbox" checked aria-label="柱"></td></tr>
          <tr class="t2"><td>构造柱</td><td><input type="checkbox" checked aria-label="构造柱"></td></tr>
          <tr class="t2"><td>砌体柱</td><td><input type="checkbox" aria-label="砌体柱"></td></tr>
          <tr class="t2 end"><td>约束边缘非阴...</td><td><input type="checkbox" checked aria-label="约束边缘非阴影区"></td></tr>
          <tr class="t1"><td><i class="pm"></i>墙</td><td><input type="checkbox" class="part" aria-label="墙"></td></tr>
          <tr class="t2"><td>剪力墙</td><td><input type="checkbox" checked aria-label="剪力墙"></td></tr>
          <tr class="t2"><td>人防门框墙</td><td><input type="checkbox" checked aria-label="人防门框墙"></td></tr>
          <tr class="t2"><td>砌体墙</td><td><input type="checkbox" checked aria-label="砌体墙"></td></tr>
          <tr class="t2"><td>砌体加筋</td><td><input type="checkbox" aria-label="砌体加筋"></td></tr>
          <tr class="t2"><td>保温墙</td><td><input type="checkbox" aria-label="保温墙"></td></tr>
          <tr class="t2"><td>暗梁</td><td><input type="checkbox" aria-label="暗梁"></td></tr>
          <tr class="t2"><td>墙垛</td><td><input type="checkbox" aria-label="墙垛"></td></tr>
          <tr class="t2 end"><td>幕墙</td><td><input type="checkbox" checked aria-label="幕墙"></td></tr>
          <tr class="t1"><td><i class="pm"></i>门窗洞</td><td><input type="checkbox" aria-label="门窗洞"></td></tr>
          <tr class="t2"><td>门</td><td><input type="checkbox" aria-label="门"></td></tr>
          <tr class="t2"><td>窗</td><td><input type="checkbox" aria-label="窗"></td></tr>
          <tr class="t2"><td>门联窗</td><td><input type="checkbox" aria-label="门联窗"></td></tr>
          <tr class="t2"><td>墙洞</td><td><input type="checkbox" aria-label="墙洞"></td></tr>
          <tr class="t2"><td>带形窗</td><td><input type="checkbox" aria-label="带形窗"></td></tr>
          <tr class="t2"><td>带形洞</td><td><input type="checkbox" aria-label="带形洞"></td></tr>
          <tr class="t2"><td>飘窗</td><td><input type="checkbox" aria-label="飘窗"></td></tr>
          <tr class="t2"><td>老虎窗</td><td><input type="checkbox" aria-label="老虎窗"></td></tr>
          <tr class="t2"><td>过梁</td><td><input type="checkbox" aria-label="过梁"></td></tr>
          <tr class="t2 end"><td>壁龛</td><td><input type="checkbox" aria-label="壁龛"></td></tr>
          <tr class="t1"><td><i class="pm"></i>梁</td><td><input type="checkbox" checked aria-label="梁"></td></tr>
          <tr class="t2"><td>梁</td><td><input type="checkbox" checked aria-label="梁"></td></tr>
          <tr class="t2"><td>连梁</td><td><input type="checkbox" checked aria-label="连梁"></td></tr>
          <tr class="t2 end"><td>圈梁</td><td><input type="checkbox" checked aria-label="圈梁"></td></tr>
          <tr class="t1"><td><i class="pm"></i>板</td><td><input type="checkbox" class="part" aria-label="板"></td></tr>
          <tr class="t2"><td></td><td><input type="checkbox" checked aria-label="现浇板"></td></tr>
        </tbody>
      </table>
    </div>
    <div class="dfoot"><button>恢复默认设置</button></div>
  </aside>
</main>

<footer class="status">
  <span class="s1">X = 25558 Y = 3813 Z = -3200</span><span class="s2">层高：</span><span class="s3">3</span><span class="s4">标高：</span><span class="s5">-3.2~-0.2</span><span class="s6">0</span><span class="s7">隐藏：0</span>
  <div class="modes">
    <button aria-label="正交"><svg width="16" height="16" viewBox="0 0 16 16" fill="none" stroke="#333"><path d="M2.500 1v13.500H15M2.500 10.500h4v4"/></svg></button>
    <button class="on w" aria-label="捕捉"><svg width="16" height="16" viewBox="0 0 16 16" fill="none"><path d="M2.500 2.500h13v13h-13z" stroke="#3c86d6"/><path d="M.5.5h4v4h-4z" fill="#f9b27c" stroke="#e07020"/></svg><i class="car"></i></button>
    <button class="apart" aria-label="交点"><svg width="16" height="16" viewBox="0 0 16 16" stroke="#333"><path d="M0 1l16 14M16 1L0 15"/><circle cx="8" cy="8" r="1.500" fill="#333"/></svg></button>
    <button class="apart w" aria-label="角度"><svg width="16" height="16" viewBox="0 0 16 16" stroke="#333"><path d="M0 14.500h16M1 14L12 2"/><circle cx="7" cy="8" r="1.500" fill="#333"/></svg><i class="car"></i></button>
    <button class="w" aria-label="动态输入"><svg width="16" height="16" viewBox="0 0 16 16" stroke="#333"><path d="M0 4.500h7M3.500 1v7"/><path d="M6.500 10.500h9v3h-9z" fill="#333"/></svg><i class="car"></i></button>
    <button class="on">跨图层选择</button>
    <button>折线选择</button>
  </div>
  <span>指定第一点</span>
</footer>

<footer class="taskbar">
  <div class="tsearch"></div>
  <svg width="900" height="10" viewBox="550 1040 900 10"><path d="M565 1050q7-4 14 0z" fill="#4fc3f7"/><path d="M608 1048h17v3h-17z" fill="#7d8a99"/><path d="M718 1048h24v3h-24z" fill="#9aa4b4"/><path d="M720 1049h20v2h-20z" fill="#5b87c5"/><rect x="945" y="1048" width="22" height="6" rx="2" fill="#46b9fb"/><rect x="1058" y="1048" width="20" height="6" rx="2" fill="#d8232e"/><path d="M1175 1050q7-4 14 0z" fill="#25c0d0"/><path d="M1285 1049h18v2h-18z" fill="#4a9be8"/><rect x="1398" y="1048" width="22" height="6" rx="2" fill="#eaf6ff"/></svg>
  <div class="active"></div>
  <time>16:24</time>
</footer>

<div class="ime">
  <svg width="208" height="34" viewBox="1522 88 208 34" fill="none" stroke="#1c76c8">
    <path d="M1536.500 93.500h192v23h-192z" fill="#fff" stroke="#b9bcc2"/>
    <path d="M1523 93l20-4 1 1 5 23-1 2-20 4-2-1-4-23z" fill="#f4511e" stroke="none"/><path d="M1541 96q-8-2-13 2-1 4 6 5 8 1 7 5-4 4-13 3" stroke="#fff" stroke-width="3.500"/>
    <path d="M1557.500 101.500h12v6h-12zM1563.500 97v16" stroke-width="2"/><circle cx="1581" cy="101" r="1.500"/><path d="M1588 105v2l-2 4" stroke-width="3"/>
    <circle cx="1607" cy="105" r="7" stroke-width="1.600"/><path d="M1605 101v3M1609 101v3M1603 106q4 5 8 0" stroke-width="1.300"/>
    <rect x="1626" y="97" width="6" height="10" rx="3" fill="#1c76c8"/><path d="M1624 104q0 6 5 6t5-6M1629 110v3M1626 113h6" stroke-width="1.300"/>
    <path d="M1643 99h16v12h-16z" fill="#1c76c8" stroke="none"/><path d="M1645 102h12M1645 105h12M1647 108.500h8" stroke="#fff" stroke-dasharray="2 1"/>
    <g fill="#b3c3da" stroke="none"><circle cx="1673" cy="100" r="3.500"/><path d="M1667 112q0-8 6-8t6 8z"/></g><path d="M1674.500 105.500h5v7h-5zM1676 108h2M1676 110h2" stroke="#8fa6c6" fill="#fff"/>
    <path d="M1692 98l-4 2 0 5 3 0v8h9v-8h3v-5l-4-2q-3 3-7 0z" fill="#1c76c8" stroke="none"/>
    <path d="M1710 99h6v6h-6zM1710 107h6v6h-6zM1718 107h6v6h-6z" fill="#1c76c8" stroke="none"/><path d="M1718.500 99.500h5v5h-5z"/>
  </svg>
</div>

<svg class="notes" width="1836" height="1050" viewBox="0 0 1836 1050" fill="#ff2010" aria-hidden="true">
  <path d="M39.700 157L56 162L52.700 164L86 200L373.500 509L372 510L73 200L48 168L44 173z"/>
  <path d="M404 966L405 946L409 949L556 750L558 751L414 954L419 957z"/>
  <path d="M439 1035L448 1019L450 1022L808 858L809 860L453 1030L456 1033z"/>
  <path d="M919 768L936 776L931 779L1029 918L1027 920L923 783L921 787z"/>
</svg>
</body>
</html>
```
FILE: styles.css
```css
* { box-sizing: border-box; }
body {
  margin: 0;
  height: 100vh;
  display: flex;
  flex-direction: column;
  overflow: hidden;
  position: relative;
  background: #fff;
  color: #000;
  font: 12px/16px "Open Sans", "Noto Sans CJK SC", sans-serif;
}
button, input, select { font: inherit; color: inherit; margin: 0; padding: 0; border: 0; background: none; }
h1, h2 { margin: 0; font-size: 12px; font-weight: 400; }
ul { list-style: none; margin: 0; padding: 0; }
a { color: inherit; text-decoration: none; }
svg { display: block; flex: none; }
.defs { position: absolute; width: 0; height: 0; }
.grow { flex: 1; }
.car { width: 0; height: 0; border: 3px solid transparent; border-top-color: #555; border-bottom: 0; flex: none; }

input[type="checkbox"] {
  appearance: none;
  width: 14px;
  height: 14px;
  border: 1px solid #888;
  border-radius: 2px;
  background: #fff;
  display: grid;
  place-items: center;
  flex: none;
}
input[type="checkbox"]:checked { background: #55a0fb; border-color: #55a0fb; }
input[type="checkbox"]:checked::before {
  content: "";
  width: 8px;
  height: 4px;
  border: solid #fff;
  border-width: 0 0 2px 2px;
  transform: translateY(-1px) rotate(-45deg);
}
input.part::before { content: ""; width: 10px; height: 10px; background: #9cc8ff; border: 1px solid #3f93f5; border-radius: 1px; }

/* title and menu */
.titlebar { display: flex; height: 41px; flex: none; border-bottom: 1px solid #d4d6d8; }
.logo { width: 46px; height: 41px; padding: 8px 0 0 8px; position: relative; background: #fff; border-right: 1px solid #e4e4e4; flex: none; }
.corner { position: absolute; right: 5px; bottom: 2px; }
.head { flex: 1; min-width: 0; }
.caption { display: flex; height: 22px; }
.quick { width: 304px; padding: 1px 0 0 7px; flex: none; }
.caption h1 { flex: 1; text-align: center; line-height: 22px; white-space: nowrap; }
.min { width: 268px; display: flex; justify-content: flex-end; align-items: center; padding-right: 4px; }
.min::after { content: ""; width: 6px; height: 2px; background: #777; }
.tabrow { display: flex; height: 19px; align-items: center; }
.tabs { display: flex; flex: 1; padding-left: 4px; color: #333; }
.tabs a { padding: 0 13px; line-height: 19px; white-space: nowrap; }
.tabs .on { background: #58a6f8; color: #fff; }
.ask { width: 245px; height: 17px; border: 1px solid #c6c8ca; display: flex; align-items: center; padding: 0 7px 0 2px; }
.ask input { flex: 1; min-width: 0; height: 15px; outline: 0; }
.ask input::placeholder { color: #bfc1c3; font-size: 11px; }
.user { display: flex; gap: 5px; margin-left: 11px; width: 113px; white-space: nowrap; }
.chat { flex: none; }

/* ribbon */
.ribbon { display: flex; height: 98px; flex: none; padding-top: 2px; background: linear-gradient(#fff 50%, #e9edee); border-bottom: 1px solid #8c8e92; }
.group { display: flex; flex-direction: column; border-right: 1px solid #c6c9cc; height: 92px; white-space: nowrap; }
.group h2 { text-align: center; line-height: 18px; }
.tools { display: flex; height: 76px; padding-top: 3px; align-items: flex-start; }
.ribbon button { display: flex; align-items: center; gap: 3px; height: 19px; }
.ribbon .big { flex-direction: column; height: 67px; padding-top: 2px; gap: 5px; line-height: 16px; }
.ribbon .sel { background: #c9daf1; }
.col { display: flex; flex-direction: column; align-items: flex-start; gap: 4px; }
.col .car { margin-left: 3px; }
.big .car { margin-top: -2px; }
.g1 { width: 146px; }
.g1 .tools { padding-left: 13px; gap: 10px; }
.g2 { width: 205px; }
.g2 .tools { padding-left: 10px; gap: 9px; }
.g3 { width: 244px; }
.g3 .tools { padding-left: 6px; }
.g3 .big { width: 56px; }
.c1 { width: 63px; padding-left: 5px; }
.c2 { padding-left: 5px; }
.g4 { width: 168px; }
.g4 .tools { padding-left: 6px; }
.g4 .col button { padding: 0 6px 0 3px; }
.u1 { width: 78px; }

/* option bar */
.options { display: flex; align-items: center; height: 27px; flex: none; padding: 1px 0 0 2px; background: #c9cbd0; border-bottom: 1px solid #8c8e92; white-space: nowrap; }
.dd {
  appearance: none;
  width: 100px;
  height: 23px;
  padding-left: 3px;
  border: 1px solid #a4a6aa;
  background:
    linear-gradient(45deg, transparent 50%, #555 50%) right 8px center / 3px 3px no-repeat,
    linear-gradient(315deg, transparent 50%, #555 50%) right 5px center / 3px 3px no-repeat,
    #fff;
}
.options label { display: flex; align-items: center; }
.chk { gap: 2px; padding: 0 1px; }
.off { color: #77797e; }
.num { width: 79px; height: 21px; padding-left: 2px; background: #fff; border: 1px solid #b4b6ba; color: #000; }
.ecc { border-left: 1px solid #aaacb0; border-right: 1px solid #aaacb0; padding: 0 3px; margin: 0 3px; }
.shift { width: 58px; }
.spin { display: flex; width: 62px; height: 21px; margin: 0 1px; background: #fff; border: 1px solid #b4b6ba; color: #999; align-items: center; justify-content: space-between; padding: 0 5px 0 2px; }
.spin input { width: 40px; }
.spin i { width: 5px; height: 13px; background: #444; clip-path: polygon(50% 0, 100% 25%, 0 25%, 0 75%, 100% 75%, 50% 100%, 0 75%, 0 25%); }

/* work area */
.work { flex: 1; min-height: 0; display: flex; }
.panel { display: flex; flex-direction: column; border: 1px solid #bfc1c6; border-top: 0; background: #fff; }
.grip { height: 12px; flex: none; background: #d3d4d9; border-bottom: 1px solid #c4c6cb; display: flex; justify-content: flex-end; }
.grip button { width: 16px; line-height: 12px; color: #666; font-size: 14px; }
.name { height: 22px; flex: none; padding-left: 8px; line-height: 22px; color: #808080; background: #efefef; border-bottom: 1px solid #c9cbd0; }
.nav { width: 213px; }
.navbar { display: flex; align-items: center; gap: 5px; height: 28px; flex: none; padding: 0 1px 0 7px; background: #efefef; border-bottom: 1px solid #c9cbd0; }
.navbar button { width: 23px; height: 22px; border: 1px solid #4a9af0; border-radius: 3px; background: #e6f1fd; display: grid; place-items: center; }
.tree { flex: 1; min-height: 0; display: flex; overflow: hidden; padding-top: 3px; }
.tree ul { flex: 1; padding-left: 3px; display: flex; flex-direction: column; }
.tree li { display: flex; align-items: center; height: 24px; flex: none; gap: 4px; }
.tree li svg { width: 16px; height: 14px; }
.tree b { margin-left: 2px; width: 30px; line-height: 10px; background: #ffd95e; color: #a88416; font: 700 8px/10px "Liberation Serif", serif; text-align: center; }
.tree .sub { height: 21px; margin: 1px 0 2px 37px; width: 97px; padding-left: 3px; gap: 6px; }
.tree .sub svg { width: 16px; height: 16px; }
.tree .on { background: #c9daf1; }
.tree .bar { width: 8px; margin: 13px 3px 37px 0; border-radius: 4px; background: #cdcdcd; }

.mid { width: 277px; margin-left: 4px; display: flex; flex-direction: column; gap: 4px; }
.comps { flex: 1; min-height: 0; }
.props { height: 312px; flex: none; }
.ptabs { display: flex; height: 23px; flex: none; background: #efefef; border-bottom: 1px solid #c9cbd0; }
.ptabs button { width: 65px; padding-top: 1px; line-height: 21px; background: #dedfe0; color: #808080; border-right: 1px solid #c9cbd0; }
.ptabs .on { background: #efefef; color: #111; font-weight: 500; }
.compbar { display: flex; align-items: center; height: 28px; flex: none; padding: 1px 3px 0 6px; gap: 9px; background: #efefef; border-bottom: 1px solid #c9cbd0; color: #222; }
.compbar button { display: flex; align-items: center; gap: 4px; white-space: nowrap; }
.find { display: flex; align-items: center; height: 20px; flex: none; padding: 0 7px 0 2px; border-bottom: 1px solid #c9cbd0; }
.find input { flex: 1; min-width: 0; outline: 0; }
.find input::placeholder { color: #777; }
.ctree { padding-top: 2px; }
.ctree li { height: 24px; display: flex; align-items: center; }
.l0::before, .l1::before { content: ""; width: 7px; height: 7px; margin-right: 6px; background: #333; clip-path: polygon(100% 0, 100% 100%, 0 100%); }
.l0 { padding-left: 10px; }
.l1 { padding-left: 30px; }
.l2 { padding-left: 60px; }
.l2 span { line-height: 21px; padding: 0 4px 0 3px; }
.l2 .on { background: #b3ccec; }

table { border-collapse: collapse; table-layout: fixed; }
th { font-weight: 400; }
th, td { height: 21px; padding: 1px 0 0; border: 1px solid #d2d2d2; line-height: 16px; white-space: nowrap; overflow: hidden; }
td input[type="checkbox"] { margin: 0 auto; }
.ptable { flex: 1; min-height: 0; overflow: hidden; display: flex; justify-content: space-between; }
.ptable table { width: 261px; margin: -1px 0 0 -1px; }
.ptable th { background: #efefef; color: #333; }
.ptable td { padding-left: 3px; }
.ptable td:last-child { padding: 0; }
.n { width: 22px; }
.k { width: 101px; }
.v { width: 96px; }
.blue { color: #1464f0; }
.ptable .ro { background: #e9e9e9; color: #8c8c8c; }
.ptable .bar { width: 8px; height: 110px; margin: 106px 3px 0 0; border-radius: 4px; background: #cdcdcd; }

.split { width: 4px; flex: none; background: #fff; display: flex; align-items: center; }
.split i { width: 4px; height: 100px; background: #5e6773; }
.view { flex: 1; min-width: 0; position: relative; background: #000; overflow: hidden; }
.scene { width: 100%; height: 100%; }
.marks { font: 18px "Noto Sans CJK SC", sans-serif; }
.ax { font: 14px "Noto Sans CJK SC", sans-serif; }
.vbar { position: absolute; right: 0; top: 0; width: 33px; height: 227px; background: #9b9da1; padding: 10px 0 0 4px; }

.disp { width: 196px; border-right: 0; }
.dtabs { display: flex; align-items: flex-end; gap: 4px; height: 28px; flex: none; padding-left: 3px; background: #efefef; border-bottom: 1px solid #c9cbd0; }
.dtabs button { width: 74px; height: 22px; padding-top: 1px; background: #dedede; color: #555; border-radius: 4px 4px 0 0; }
.dtabs .on { height: 24px; margin-bottom: -1px; background: #fff; color: #2a7fe0; border: 1px solid #c9cbd0; border-bottom: 0; }
.dtable { flex: 1; min-height: 0; margin: 2px 0 0 2px; overflow: hidden; border: 1px solid #bfc1c6; border-right: 0; }
.dtable table { width: 194px; }
.dtable th { background: #efefef; color: #333; }
.dtable th.d1 { width: 131px; }
.dtable td:last-child { padding: 0; }
.dtable td:first-child { background: linear-gradient(#e2e2e2, #e2e2e2) 8px 0 / 1px 100% no-repeat; }
.pm { display: inline-grid; place-items: center; width: 13px; height: 13px; margin: -3px 6px 0 0; border: 1px solid #888; border-radius: 2px; background: #fff; vertical-align: middle; }
.pm::before { content: ""; width: 5px; height: 1px; background: #333; }
.t0 .pm { background: #ddd; border-color: #444; }
.t0 td:first-child { padding-left: 1px; }
.t1 td:first-child { padding-left: 11px; }
.dtable .t2 td:first-child {
  padding-left: 40px;
  background:
    linear-gradient(#e2e2e2, #e2e2e2) 8px 0 / 1px 100% no-repeat,
    linear-gradient(#e2e2e2, #e2e2e2) 18px 0 / 1px 100% no-repeat,
    linear-gradient(#e2e2e2, #e2e2e2) 18px 10px / 16px 1px no-repeat;
}
.dtable .end td:first-child {
  background:
    linear-gradient(#e2e2e2, #e2e2e2) 8px 0 / 1px 100% no-repeat,
    linear-gradient(#e2e2e2, #e2e2e2) 18px 0 / 1px 10px no-repeat,
    linear-gradient(#e2e2e2, #e2e2e2) 18px 10px / 16px 1px no-repeat;
}
.dfoot { height: 39px; flex: none; overflow: hidden; padding: 7px 0 0 180px; }
.dfoot button { width: 90px; height: 26px; border: 1px solid #bbb; border-radius: 3px; white-space: nowrap; }

/* status bar */
.status { display: flex; align-items: center; height: 29px; flex: none; padding: 1px 0 0 2px; background: #dcdcde; color: #333; white-space: nowrap; }
.s1 { width: 263px; font-size: 13px; }
.s2 { width: 41px; }
.s3 { width: 42px; }
.s4 { width: 40px; }
.s5 { width: 93px; }
.s6 { width: 103px; }
.s7 { width: 103px; }
.modes { display: flex; gap: 4px; margin-right: 6px; }
.modes button { display: flex; align-items: center; justify-content: center; gap: 5px; height: 25px; min-width: 24px; padding: 0 5px; border: 1px solid #98999c; background: #cdcdd0; }
.modes button[aria-label] { padding: 0 3px; }
.modes .w { width: 35px; }
.modes .apart { margin-left: 3px; }
.modes .on { background: #fff; border-color: #2a8ff0; }

.taskbar { display: flex; height: 11px; flex: none; overflow: hidden; border-top: 1px solid #f2f5f8; background: linear-gradient(90deg, #cfe6ec, #d3e2ec 60%, #cfd9e8); }
.tsearch { width: 344px; margin: 1px 158px 0 48px; height: 12px; background: #fff; border: 1px solid #bbb; flex: none; }
.active { width: 111px; height: 11px; margin-left: 51px; background: #edf0f8; }
.taskbar time { margin-left: auto; width: 22px; line-height: 16px; padding-top: 2px; overflow: hidden; }

.ime { position: absolute; right: 106px; top: 88px; }
.notes { position: absolute; left: 0; top: 0; pointer-events: none; }
```
